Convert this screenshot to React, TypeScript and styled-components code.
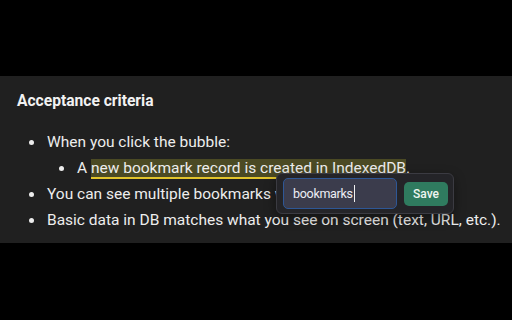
import styled, { createGlobalStyle } from "styled-components";

const GlobalStyle = createGlobalStyle`
  html, body {
    margin: 0;
    background: #000;
  }
  body {
    font-family: Roboto, "Liberation Sans", sans-serif;
    -webkit-font-smoothing: antialiased;
  }
`;

const Page = styled.div`
  width: 512px;
  height: 320px;
  padding-top: 76px;
  box-sizing: border-box;
`;

const Panel = styled.section`
  position: relative;
  background: #202020;
  height: 167px;
  padding: 15px 4px 0 17px;
  box-sizing: border-box;
  color: #ededed;
`;

const Heading = styled.h3`
  margin: 0 0 18px;
  font-size: 15.6px;
  font-weight: 700;
  line-height: 20px;
  color: #f2f2f2;
`;

const List = styled.ul`
  margin: 0;
  padding: 0 0 0 30px;
  list-style: none;
  font-size: 15.5px;
  line-height: 26px;
  white-space: nowrap;
`;

const Item = styled.li`
  position: relative;

  &::before {
    content: "";
    position: absolute;
    left: -18.5px;
    top: 10.5px;
    width: 5px;
    height: 5px;
    border-radius: 50%;
    background: #ececec;
  }
`;

const Mark = styled.span`
  background: #4b4a24;
  border-bottom: 2px solid #e2c42c;
`;

const Popup = styled.div`
  position: absolute;
  left: 276px;
  top: 97px;
  width: 178px;
  height: 41px;
  box-sizing: border-box;
  display: flex;
  align-items: center;
  gap: 7px;
  padding: 0 6px;
  background: #242428;
  border: 1px solid #3b3b42;
  border-radius: 6px;
  box-shadow: 0 4px 12px rgba(0, 0, 0, 0.4);
`;

const Field = styled.div`
  width: 114px;
  height: 31px;
  flex-shrink: 0;
  box-sizing: border-box;
  display: flex;
  align-items: center;
  padding-left: 9px;
  background: #3b3c4c;
  border: 1px solid #2e5796;
  border-radius: 5px;
  font-size: 12.5px;
  letter-spacing: -0.3px;
  color: #eceef4;
`;

const Caret = styled.span`
  display: inline-block;
  width: 1px;
  height: 17px;
  margin-left: 1px;
  background: #f0f0f0;
`;

const SaveButton = styled.button`
  width: 44px;
  height: 24px;
  flex-shrink: 0;
  border: none;
  border-radius: 5px;
  background: #2f7b5f;
  color: #eef5f1;
  font-family: inherit;
  font-size: 12px;
  font-weight: 500;
  padding: 0;
`;

export default function App() {
  return (
    <Page>
      <GlobalStyle />
      <Panel>
        <Heading>Acceptance criteria</Heading>
        <List>
          <Item>
            When you click the bubble:
            <List>
              <Item>
                A <Mark>new bookmark record is created in IndexedDB</Mark>.
              </Item>
            </List>
          </Item>
          <Item>You can see multiple bookmarks with different formats.</Item>
          <Item>Basic data in DB matches what you see on screen (text, URL, etc.).</Item>
        </List>
        <Popup>
          <Field>
            bookmarks
            <Caret />
          </Field>
          <SaveButton>Save</SaveButton>
        </Popup>
      </Panel>
    </Page>
  );
}
